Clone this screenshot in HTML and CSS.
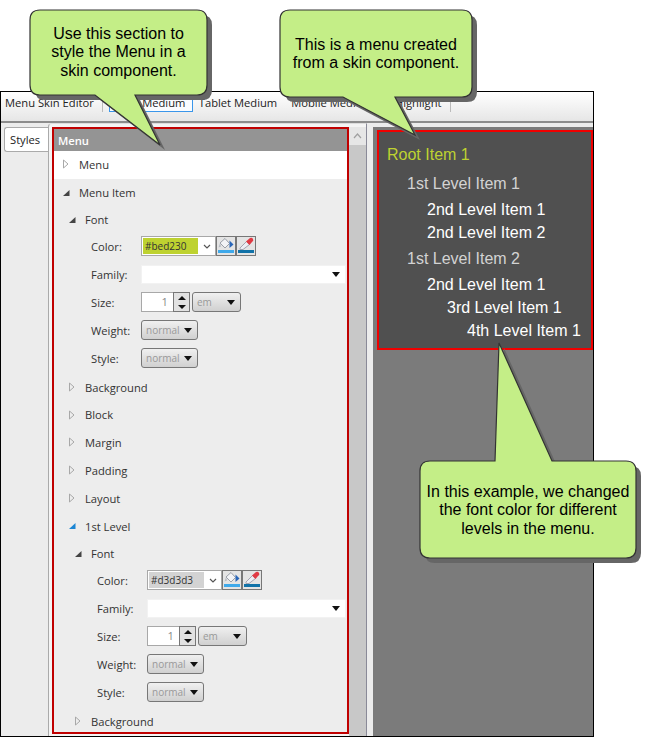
FILE: index.html
```html
<!DOCTYPE html>
<html lang="en">
<head>
    <title>Menu Skin Editor</title>
    <meta charset="utf-8">
    <link rel="stylesheet" href="styles.css">
</head>
<body>
    <div class="window">
        <div class="tabbar">
            <span class="tab">Menu Skin Editor</span>
            <span class="tab-sep"></span>
            <span class="tab tab-active">Web Medium</span>
            <span class="tab">Tablet Medium</span>
            <span class="tab">Mobile Medium</span>
            <span class="tab tab-last">Highlight</span>
            <span class="tab-sep tab-sep-end"></span>
        </div>
        <div class="main">
            <div class="side-tabs">
                <div class="side-tab">Styles</div>
            </div>
            <div class="editor">
                <div class="redbox">
                    <div class="panel-title">Menu</div>
                    <div class="row row-white"><svg class="arrow" viewBox="0 0 8 10"><path d="M1.5 1 L6 5 L1.5 9 Z" fill="#fff" stroke="#a8a8a8"/></svg>Menu</div>
                    <div class="row row-tight"><svg class="arrow" viewBox="0 0 8 10"><path d="M7.5 2 V8 H1 Z" fill="#444"/></svg>Menu Item</div>
                    <div class="sub">
                        <div class="row row-tight"><svg class="arrow" viewBox="0 0 8 10"><path d="M7.5 2 V8 H1 Z" fill="#444"/></svg>Font</div>
                        <div class="sub sub-form">
                            <div class="form-row">
                                <span class="label">Color:</span>
                                <div class="combo"><span class="swatch swatch-yellow">#bed230</span><svg class="chevron" viewBox="0 0 8 5"><path d="M1 1 L4 4 L7 1" fill="none" stroke="#555" stroke-width="1.2"/></svg></div>
                                <span class="icon-btn"><svg viewBox="0 0 18 18"><path d="M3 6 L8 1.5 L12.5 6.5 L8 11 Z" fill="#f2f3f6" stroke="#9a9fa8"/><path d="M3 6 L1.5 10.5 L4 9.5 Z" fill="#b8bcc4"/><path d="M12.5 3.5 L16.5 7.5 L12.5 11 Z" fill="#2a66b8"/><rect x="1" y="13" width="16" height="3" fill="#3fa9ea"/></svg></span>
                                <span class="icon-btn"><svg viewBox="0 0 18 18"><path d="M3 11 L9.5 4.5 L12.5 7.5 L6 12.5 L3 12.5 Z" fill="#eceef4" stroke="#a4a4b0"/><path d="M9 4.5 L13 1 Q15 0 16 2 Q17 4 15 5 L12.5 8 Z" fill="#e03a44"/><rect x="1" y="13" width="16" height="3" fill="#1172a8"/></svg></span>
                            </div>
                            <div class="form-row">
                                <span class="label">Family:</span>
                                <div class="family"><span class="caret"></span></div>
                            </div>
                            <div class="form-row">
                                <span class="label">Size:</span>
                                <div class="num">1</div>
                                <div class="spin"><span class="spin-up"></span><span class="spin-down"></span></div>
                                <div class="select select-unit">em<span class="caret"></span></div>
                            </div>
                            <div class="form-row">
                                <span class="label">Weight:</span>
                                <div class="select">normal<span class="caret"></span></div>
                            </div>
                            <div class="form-row">
                                <span class="label">Style:</span>
                                <div class="select">normal<span class="caret"></span></div>
                            </div>
                        </div>
                        <div class="row"><svg class="arrow" viewBox="0 0 8 10"><path d="M1.5 1 L6 5 L1.5 9 Z" fill="none" stroke="#a8a8a8"/></svg>Background</div>
                        <div class="row row-tight"><svg class="arrow" viewBox="0 0 8 10"><path d="M1.5 1 L6 5 L1.5 9 Z" fill="none" stroke="#a8a8a8"/></svg>Block</div>
                        <div class="row"><svg class="arrow" viewBox="0 0 8 10"><path d="M1.5 1 L6 5 L1.5 9 Z" fill="none" stroke="#a8a8a8"/></svg>Margin</div>
                        <div class="row"><svg class="arrow" viewBox="0 0 8 10"><path d="M1.5 1 L6 5 L1.5 9 Z" fill="none" stroke="#a8a8a8"/></svg>Padding</div>
                        <div class="row"><svg class="arrow" viewBox="0 0 8 10"><path d="M1.5 1 L6 5 L1.5 9 Z" fill="none" stroke="#a8a8a8"/></svg>Layout</div>
                        <div class="row"><svg class="arrow" viewBox="0 0 8 10"><path d="M7.5 2 V8 H1 Z" fill="#1c86d4"/></svg>1st Level</div>
                        <div class="sub">
                            <div class="row row-tight"><svg class="arrow" viewBox="0 0 8 10"><path d="M7.5 2 V8 H1 Z" fill="#444"/></svg>Font</div>
                            <div class="sub sub-form">
                                <div class="form-row">
                                    <span class="label">Color:</span>
                                    <div class="combo"><span class="swatch swatch-grey">#d3d3d3</span><svg class="chevron" viewBox="0 0 8 5"><path d="M1 1 L4 4 L7 1" fill="none" stroke="#555" stroke-width="1.2"/></svg></div>
                                    <span class="icon-btn"><svg viewBox="0 0 18 18"><path d="M3 6 L8 1.5 L12.5 6.5 L8 11 Z" fill="#f2f3f6" stroke="#9a9fa8"/><path d="M3 6 L1.5 10.5 L4 9.5 Z" fill="#b8bcc4"/><path d="M12.5 3.5 L16.5 7.5 L12.5 11 Z" fill="#2a66b8"/><rect x="1" y="13" width="16" height="3" fill="#3fa9ea"/></svg></span>
                                    <span class="icon-btn"><svg viewBox="0 0 18 18"><path d="M3 11 L9.5 4.5 L12.5 7.5 L6 12.5 L3 12.5 Z" fill="#eceef4" stroke="#a4a4b0"/><path d="M9 4.5 L13 1 Q15 0 16 2 Q17 4 15 5 L12.5 8 Z" fill="#e03a44"/><rect x="1" y="13" width="16" height="3" fill="#1172a8"/></svg></span>
                                </div>
                                <div class="form-row">
                                    <span class="label">Family:</span>
                                    <div class="family"><span class="caret"></span></div>
                                </div>
                                <div class="form-row">
                                    <span class="label">Size:</span>
                                    <div class="num">1</div>
                                    <div class="spin"><span class="spin-up"></span><span class="spin-down"></span></div>
                                    <div class="select select-unit">em<span class="caret"></span></div>
                                </div>
                                <div class="form-row">
                                    <span class="label">Weight:</span>
                                    <div class="select">normal<span class="caret"></span></div>
                                </div>
                                <div class="form-row">
                                    <span class="label">Style:</span>
                                    <div class="select">normal<span class="caret"></span></div>
                                </div>
                            </div>
                            <div class="row"><svg class="arrow" viewBox="0 0 8 10"><path d="M1.5 1 L6 5 L1.5 9 Z" fill="none" stroke="#a8a8a8"/></svg>Background</div>
                        </div>
                    </div>
                </div>
                <div class="scrollbar">
                    <div class="scroll-up"><svg viewBox="0 0 9 6"><path d="M1 5 L4.5 1 L8 5" fill="none" stroke="#a0a0a0" stroke-width="1.2"/></svg></div>
                </div>
            </div>
            <div class="preview">
                <div class="preview-menu">
                    <div class="item root">Root Item 1</div>
                    <div class="item lvl1 lvl1-first">1st Level Item 1</div>
                    <div class="item lvl2 lvl2-first">2nd Level Item 1</div>
                    <div class="item lvl2">2nd Level Item 2</div>
                    <div class="item lvl1">1st Level Item 2</div>
                    <div class="item lvl2 lvl2-first">2nd Level Item 1</div>
                    <div class="item lvl3">3rd Level Item 1</div>
                    <div class="item lvl4">4th Level Item 1</div>
                </div>
            </div>
        </div>
    </div>

    <svg class="callout-shapes" viewBox="0 0 651 737">
        <g fill="#666">
            <path transform="translate(5 5)" d="M40 10 H197 Q207 10 207 20 V85 Q207 95 197 95 H135 L160 145 L95 95 H40 Q30 95 30 85 V20 Q30 10 40 10 Z"/>
            <path transform="translate(5 5)" d="M290 10 H462 Q472 10 472 20 V87 Q472 97 462 97 H395 L415 135 L343 97 H290 Q280 97 280 87 V20 Q280 10 290 10 Z"/>
            <path transform="translate(5 5)" d="M430 461 H495 L499 343 L552 461 H626 Q636 461 636 471 V548 Q636 558 626 558 H430 Q420 558 420 548 V471 Q420 461 430 461 Z"/>
        </g>
        <g fill="#c4ee87" stroke="#333" stroke-width="1.2">
            <path d="M40 10 H197 Q207 10 207 20 V85 Q207 95 197 95 H135 L160 145 L95 95 H40 Q30 95 30 85 V20 Q30 10 40 10 Z"/>
            <path d="M290 10 H462 Q472 10 472 20 V87 Q472 97 462 97 H395 L415 135 L343 97 H290 Q280 97 280 87 V20 Q280 10 290 10 Z"/>
            <path d="M430 461 H495 L499 343 L552 461 H626 Q636 461 636 471 V548 Q636 558 626 558 H430 Q420 558 420 548 V471 Q420 461 430 461 Z"/>
        </g>
    </svg>
    <div class="callout-text callout-1">Use this section to<br>style the Menu in a<br>skin component.</div>
    <div class="callout-text callout-2">This is a menu created<br>from a skin component.</div>
    <div class="callout-text callout-3">In this example, we changed<br>the font color for different<br>levels in the menu.</div>
</body>
</html>
```

FILE: styles.css
```css
body {
    margin: 0;
    background: white;
    font-family: "Open Sans", sans-serif;
    font-size: 11.2px;
    color: #333;
    position: relative;
    width: 651px;
    height: 737px;
    overflow: hidden;
}

.window {
    box-sizing: border-box;
    margin-top: 91px;
    width: 594px;
    height: 646px;
    border: 1px solid black;
    display: flex;
    flex-direction: column;
    background: #ececec;
}

/* top tabs */
.tabbar {
    height: 29px;
    flex: none;
    display: flex;
    align-items: flex-start;
    padding-left: 4px;
    background: linear-gradient(#ffffff, #e6e6e6);
    border-bottom: 2px solid #8c8c8c;
    color: #222;
}

.tab {
    height: 20px;
    line-height: 22px;
    margin-right: 14px;
    white-space: nowrap;
}

.tab-last {
    margin-left: 8px;
}

.tab-sep {
    width: 1px;
    height: 20px;
    background: #bbb;
    margin-left: -6px;
    margin-right: 6px;
}

.tab-active {
    box-sizing: border-box;
    width: 84px;
    border: 1px solid #3a96ea;
    border-top: 0;
    background: #fafcff;
    margin-right: 6px;
    padding-left: 6px;
    line-height: 21px;
}

.main {
    flex: 1;
    display: flex;
    min-height: 0;
}

/* left vertical tabs */
.side-tabs {
    width: 47px;
    flex: none;
    padding-top: 4px;
    padding-left: 3px;
    box-sizing: border-box;
}

.side-tab {
    height: 25px;
    line-height: 24px;
    box-sizing: border-box;
    background: white;
    border: 1px solid #aaa;
    border-right: 0;
    border-radius: 3px 0 0 3px;
    padding-left: 5px;
    color: #222;
}

.editor {
    width: 319px;
    flex: none;
    box-sizing: border-box;
    display: flex;
    padding: 3px 0 0 3px;
    background: #f4f4f4;
    border-left: 1px solid #aaa;
    border-right: 1px solid #8a8a98;
    border-top: 1px solid #ddd;
    border-top-left-radius: 4px;
}

.redbox {
    box-sizing: border-box;
    width: 297px;
    height: 607px;
    flex: none;
    border: 2px solid #c00000;
    background: #ededed;
    overflow: hidden;
}

.panel-title {
    height: 22px;
    line-height: 23px;
    background: #949494;
    color: white;
    font-weight: 600;
    padding-left: 4px;
}

.row {
    box-sizing: border-box;
    height: 28px;
    display: flex;
    align-items: center;
    padding-left: 8px;
}

.row-tight {
    height: 27px;
}

.row-white {
    background: white;
    padding-bottom: 2px;
}

.arrow {
    width: 8px;
    height: 10px;
    margin-right: 9px;
    flex: none;
}

.sub {
    padding-left: 6px;
}

.sub-form {
    padding-left: 31px;
}

/* property rows */
.form-row {
    box-sizing: border-box;
    height: 28px;
    display: flex;
    align-items: center;
    padding-bottom: 2px;
}

.label {
    width: 50px;
    flex: none;
}

.combo {
    box-sizing: border-box;
    width: 75px;
    height: 20px;
    background: white;
    border: 1px solid #a8a8a8;
    display: flex;
    align-items: center;
    padding-left: 1px;
    flex: none;
}

.swatch {
    width: 55px;
    height: 16px;
    line-height: 16px;
    font-size: 10px;
    padding-left: 2px;
    box-sizing: border-box;
    color: #333;
}

.swatch-yellow {
    background: #bed230;
}

.swatch-grey {
    background: #d3d3d3;
}

.chevron {
    width: 8px;
    height: 5px;
    margin-left: 5px;
}

.icon-btn {
    box-sizing: border-box;
    width: 20px;
    height: 20px;
    border: 1px solid #777;
    background: #e4e4e4;
    padding: 0;
    flex: none;
    display: flex;
}

.icon-btn svg {
    width: 18px;
    height: 18px;
}

.family {
    flex: 1;
    height: 19px;
    background: white;
    margin-right: 1px;
    display: flex;
    align-items: center;
    justify-content: flex-end;
    padding-right: 5px;
    box-sizing: border-box;
    border: 1px solid #f2f2f2;
}

.caret {
    width: 0;
    height: 0;
    border-left: 4px solid transparent;
    border-right: 4px solid transparent;
    border-top: 5px solid #111;
}

.num {
    box-sizing: border-box;
    width: 32px;
    height: 20px;
    flex: none;
    background: white;
    border: 1px solid #a8a8a8;
    border-right: 0;
    text-align: right;
    padding-right: 5px;
    line-height: 18px;
    color: #888;
}

.spin {
    box-sizing: border-box;
    width: 17px;
    height: 20px;
    flex: none;
    border: 1px solid #777;
    background: #e2e2e2;
    display: flex;
    flex-direction: column;
    align-items: center;
    justify-content: space-around;
}

.spin-up,
.spin-down {
    width: 0;
    height: 0;
    border-left: 4px solid transparent;
    border-right: 4px solid transparent;
}

.spin-up {
    border-bottom: 4px solid #111;
}

.spin-down {
    border-top: 4px solid #111;
}

.select {
    box-sizing: border-box;
    width: 57px;
    height: 20px;
    flex: none;
    border: 1px solid #777;
    border-radius: 3px;
    background: linear-gradient(#f0f0f0, #d0d0d0);
    display: flex;
    align-items: center;
    justify-content: space-between;
    padding: 0 5px 0 4px;
    font-size: 10px;
    color: #999;
}

.select-unit {
    width: 49px;
    margin-left: 2px;
}

/* right side */
.scrollbar {
    width: 17px;
    flex: none;
    background: #c8c8c8;
}

.scroll-up {
    height: 18px;
    background: #e6e6e6;
    display: flex;
    align-items: center;
    justify-content: center;
}

.scroll-up svg {
    width: 9px;
    height: 6px;
}

.preview {
    flex: 1;
    margin: 4px 0 0 6px;
    padding: 3px 0 0 4px;
    background: #7b7b7b;
}

.preview-menu {
    box-sizing: border-box;
    height: 220px;
    border: 2px solid #f00000;
    background: #505050;
    padding: 11px 0 0 8px;
    font-family: "Liberation Sans", Arial, sans-serif;
    font-size: 16px;
    line-height: 23px;
}

.item {
    white-space: nowrap;
}

.root {
    color: #bed230;
}

.lvl1 {
    color: #d3d3d3;
    padding-left: 20px;
    margin-top: 3px;
}

.lvl1-first {
    margin-top: 6px;
}

.lvl2 {
    color: white;
    padding-left: 40px;
}

.lvl2-first {
    margin-top: 3px;
}

.lvl3 {
    color: white;
    padding-left: 60px;
}

.lvl4 {
    color: white;
    padding-left: 80px;
}

/* callouts lie over the window */
.callout-shapes {
    position: absolute;
    top: 0;
    left: 0;
    width: 651px;
    height: 737px;
}

.callout-text {
    position: absolute;
    font-family: "Liberation Sans", Arial, sans-serif;
    font-size: 16px;
    line-height: 18.4px;
    color: black;
    text-align: center;
    white-space: nowrap;
}

.callout-1 {
    left: 30px;
    top: 25px;
    width: 177px;
}

.callout-2 {
    left: 280px;
    top: 36px;
    width: 192px;
}

.callout-3 {
    left: 420px;
    top: 483px;
    width: 216px;
}
```
